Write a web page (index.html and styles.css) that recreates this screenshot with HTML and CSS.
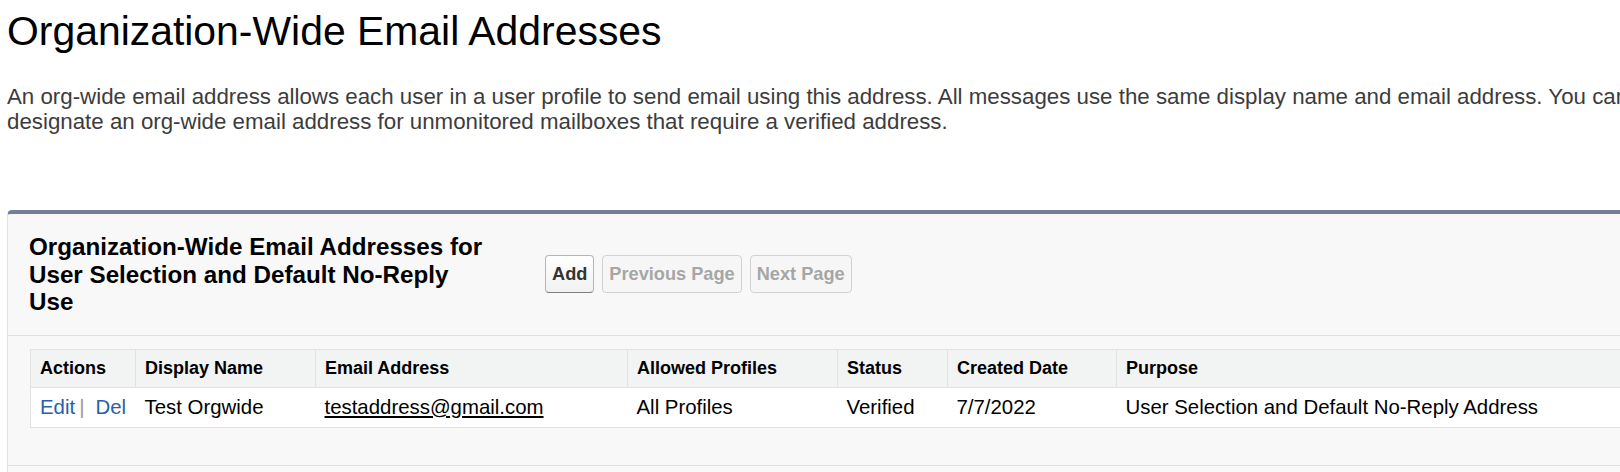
FILE: index.html
```html
<!DOCTYPE html>
<html lang="en">
<head>
<meta charset="utf-8">
<title>Organization-Wide Email Addresses</title>
<link rel="stylesheet" href="styles.css">
</head>
<body>
<div class="page">
  <h1 class="page-title">Organization-Wide Email Addresses</h1>
  <p class="page-desc">An org-wide email address allows each user in a user profile to send email using this address. All messages use the same display name and email address. You can designate an org-wide email address for unmonitored mailboxes that require a verified address.</p>

  <div class="panel">
    <div class="panel-header">
      <h2 class="panel-title">Organization-Wide Email Addresses for User Selection and Default No-Reply Use</h2>
      <div class="panel-buttons">
        <button class="btn">Add</button>
        <button class="btn btn-disabled">Previous Page</button>
        <button class="btn btn-disabled">Next Page</button>
      </div>
    </div>
    <div class="panel-body">
      <table class="list">
        <colgroup>
          <col class="c-actions">
          <col class="c-name">
          <col class="c-email">
          <col class="c-profiles">
          <col class="c-status">
          <col class="c-date">
          <col class="c-purpose">
        </colgroup>
        <thead>
          <tr>
            <th>Actions</th>
            <th>Display Name</th>
            <th>Email Address</th>
            <th>Allowed Profiles</th>
            <th>Status</th>
            <th>Created Date</th>
            <th>Purpose</th>
          </tr>
        </thead>
        <tbody>
          <tr>
            <td class="actions"><a class="action-link" href="#">Edit</a><span class="sep">|</span><a class="action-link" href="#">Del</a></td>
            <td>Test Orgwide</td>
            <td><a class="email-link" href="#">testaddress@gmail.com</a></td>
            <td>All Profiles</td>
            <td>Verified</td>
            <td>7/7/2022</td>
            <td>User Selection and Default No-Reply Address</td>
          </tr>
        </tbody>
      </table>
    </div>
    <div class="panel-footer"></div>
  </div>
</div>
</body>
</html>
```

FILE: styles.css
```css
html, body {
  margin: 0;
  padding: 0;
  background: #ffffff;
  overflow: hidden;
}

body {
  font-family: "Liberation Sans", Arial, Helvetica, sans-serif;
  color: #000000;
}

.page {
  width: 1680px;
}

.page-title {
  margin: 8px 0 0 7px;
  font-size: 40.9px;
  line-height: 46px;
  font-weight: normal;
  color: #000000;
}

.page-desc {
  margin: 30px 0 0 7px;
  font-size: 22.3px;
  line-height: 25px;
  color: #3c3c3c;
}

.panel {
  margin: 76px 0 0 7px;
  background: #f8f8f8;
  border-top: 4px solid #747e96;
  border-left: 1px solid #e2e2e2;
  border-top-left-radius: 5px;
}

.panel-header {
  display: flex;
  align-items: center;
  padding: 19px 0 19px 21px;
  border-bottom: 1px solid #e0e0e0;
}

.panel-title {
  margin: 0;
  width: 464px;
  margin-right: 52px;
  font-size: 24.2px;
  line-height: 27.5px;
  font-weight: bold;
  color: #000000;
}

.panel-buttons {
  display: flex;
  gap: 8px;
}

.btn {
  height: 38px;
  padding: 0 6px;
  font-family: "Liberation Sans", Arial, Helvetica, sans-serif;
  font-size: 18.2px;
  font-weight: bold;
  color: #333333;
  background: linear-gradient(#ffffff, #f1f1f1);
  border: 1px solid #b5b5b5;
  border-bottom-color: #7f7f7f;
  border-radius: 4px;
}

.btn-disabled {
  color: #a6a6a6;
  background: #f6f6f6;
  border-color: #d2d2d2;
}

.panel-body {
  padding: 13px 0 37px 22px;
  border-bottom: 1px solid #e0e0e0;
}

.panel-footer {
  height: 12px;
}

.list {
  border-collapse: collapse;
  table-layout: fixed;
  width: 1640px;
  background: #ffffff;
  border: 1px solid #e0e3e5;
}

.c-actions { width: 105px; }
.c-name { width: 180px; }
.c-email { width: 312px; }
.c-profiles { width: 210px; }
.c-status { width: 110px; }
.c-date { width: 169px; }

.list th {
  height: 37px;
  padding: 0 9px;
  text-align: left;
  font-size: 18px;
  font-weight: bold;
  color: #000000;
  background: #f2f3f3;
  border: 1px solid #e0e3e5;
  white-space: nowrap;
}

.list td {
  height: 39px;
  padding: 0 9px;
  font-size: 20.4px;
  color: #000000;
  white-space: nowrap;
}

.action-link {
  color: #2a5ea9;
  text-decoration: none;
}

.sep {
  color: #9a9a9a;
  margin: 0 11px 0 4px;
}

.email-link {
  color: #000000;
  text-decoration: underline;
}
```
